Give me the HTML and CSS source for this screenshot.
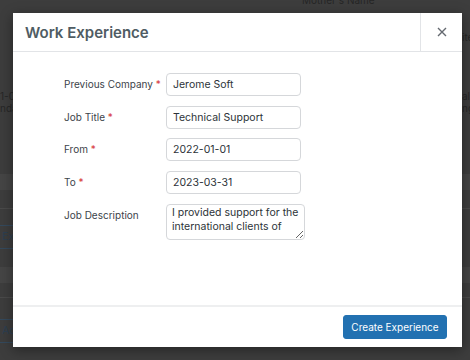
FILE: index.html
```html
<!DOCTYPE html>
<html lang="en">
<head>
    <meta charset="UTF-8">
    <meta name="viewport" content="width=device-width, initial-scale=1.0">
    <title>Work Experience</title>
    <link rel="stylesheet" href="styles.css">
</head>
<body>
    <!-- BEGIN::page behind the overlay -->
    <div class="page">
        <div class="bg-row bg-top"><span class="bg-head">Mother's Name</span><span></span></div>
        <div class="bg-row bg-r1"><span></span><span>ite</span></div>
        <div class="bg-row bg-r2"><span>1-01-01</span><span>ale</span></div>
        <div class="bg-row bg-r3"><span>nda</span><span>ng</span></div>
        <div class="bg-band"></div>
        <div class="bg-line bg-l1"></div>
        <div class="bg-btn"><span>Ex</span></div>
        <div class="bg-band bg-band2"></div>
        <div class="bg-line bg-l2"></div>
        <div class="bg-btn bg-btn2"><span>Ad</span></div>
    </div>
    <!-- END::page -->

    <!-- BEGIN::modal -->
    <div class="modal">
        <div class="modal-header">
            <h1>Work Experience</h1>
            <button class="modal-close" aria-label="Close">
                <svg width="12" height="12" viewBox="0 0 12 12">
                    <path d="M2 2L10 10M10 2L2 10" stroke="#646970" stroke-width="1.4" fill="none"/>
                </svg>
            </button>
        </div>
        <div class="modal-body">
            <div class="form-grid">
                <label>Previous Company <span class="req">*</span></label>
                <input type="text" value="Jerome Soft">

                <label>Job Title <span class="req">*</span></label>
                <input type="text" value="Technical Support">

                <label>From <span class="req">*</span></label>
                <input type="text" value="2022-01-01">

                <label>To <span class="req">*</span></label>
                <input type="text" value="2023-03-31">

                <label>Job Description</label>
                <textarea>I provided support for the international clients of</textarea>
            </div>
        </div>
        <div class="modal-footer">
            <button class="btn-primary">Create Experience</button>
        </div>
    </div>
    <!-- END::modal -->
</body>
</html>
```

FILE: styles.css
```css
*{
    margin: 0;
    padding: 0;
    box-sizing: border-box;
    font-family: Inter, "Noto Sans", sans-serif;
}

body{
    width: 470px;
    height: 360px;
    overflow: hidden;
    background: #3d3d3d;
    position: relative;
}

/* page behind the overlay */
.page{
    color: #262626;
    font-size: 10px;
}

.bg-row{
    display: grid;
    grid-template-columns: 462px 1fr;
    height: 12px;
    line-height: 12px;
    white-space: nowrap;
    overflow: hidden;
}

.bg-top{
    margin-top: -6px;
}

.bg-head{
    padding-left: 302px;
}

.bg-r1{
    margin-top: 25px;
}

.bg-r2{
    margin-top: 47px;
}

.bg-band{
    margin-top: 60px;
    height: 16px;
    background: #454545;
}

.bg-line{
    height: 1px;
    background: #4a4a4a;
}

.bg-l1{
    margin-top: 18px;
}

.bg-btn{
    margin-top: 16px;
    width: 60px;
    height: 24px;
    border-top: 1px solid #34495c;
    border-bottom: 1px solid #34495c;
    border-right: 1px solid #34495c;
    color: #2c3f52;
    line-height: 22px;
    font-size: 10.5px;
    padding-left: 2px;
}

.bg-band2{
    margin-top: 18px;
}

.bg-l2{
    margin-top: 14px;
}

.bg-btn2{
    margin-top: 21px;
    width: 77px;
}

/* modal */
.modal{
    position: absolute;
    left: 13px;
    top: 13px;
    width: 449px;
    height: 334px;
    background: #fff;
    display: flex;
    flex-direction: column;
    box-shadow: 0 3px 12px rgba(0,0,0,.4);
}

.modal-header{
    display: flex;
    align-items: stretch;
    height: 39px;
    border-bottom: 1px solid #e2e4e7;
}

.modal-header h1{
    flex: 1;
    display: flex;
    align-items: center;
    padding-left: 12px;
    font-size: 15px;
    font-weight: 600;
    color: #4f5c63;
}

.modal-close{
    width: 42px;
    border: none;
    border-left: 1px solid #e2e4e7;
    background: #fff;
    display: flex;
    align-items: center;
    justify-content: center;
    cursor: pointer;
}

.modal-body{
    flex: 1;
    padding: 21px 0 0 51px;
}

.form-grid{
    display: grid;
    grid-template-columns: 102px auto;
    row-gap: 9.7px;
    align-items: start;
    justify-items: start;
}

.form-grid label{
    font-size: 10px;
    color: #3c434a;
    padding-top: 4px;
    line-height: 14px;
}

.req{
    color: #d63638;
}

.form-grid input{
    width: 135px;
    height: 23px;
    border: 1px solid #d5d7da;
    border-radius: 4px;
    padding: 0 6px;
    font-size: 10.5px;
    color: #2c3338;
    outline: none;
}

.form-grid textarea{
    width: 139px;
    height: 36px;
    border: 1px solid #d5d7da;
    border-radius: 4px;
    padding: 1px 3px 0 5px;
    font-size: 10.5px;
    line-height: 14px;
    color: #2c3338;
    overflow: hidden;
    resize: vertical;
    outline: none;
}

.modal-footer{
    height: 42px;
    border-top: 2px solid #eeeff0;
    display: flex;
    align-items: center;
    justify-content: flex-end;
    padding-right: 15px;
}

.btn-primary{
    height: 24px;
    width: 104px;
    background: #2271b1;
    border: 1px solid #2271b1;
    border-radius: 3px;
    color: #fff;
    font-size: 10px;
}
```
